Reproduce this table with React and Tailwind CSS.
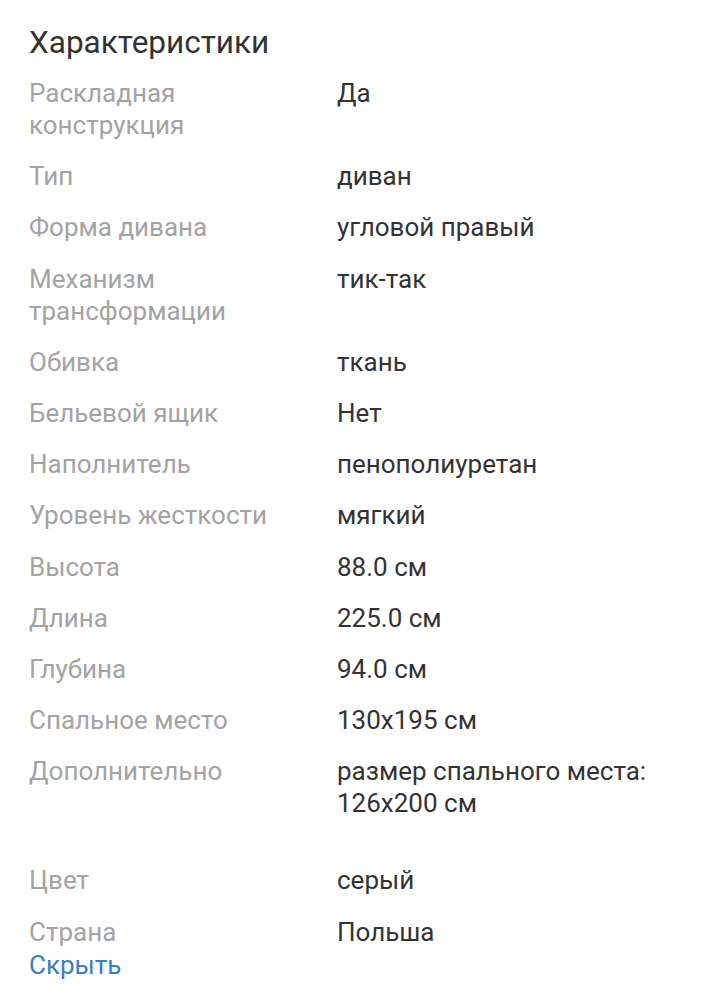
import React from "react";

const specs = [
  ["Раскладная конструкция", "Да"],
  ["Тип", "диван"],
  ["Форма дивана", "угловой правый"],
  ["Механизм трансформации", "тик-так"],
  ["Обивка", "ткань"],
  ["Бельевой ящик", "Нет"],
  ["Наполнитель", "пенополиуретан"],
  ["Уровень жесткости", "мягкий"],
  ["Высота", "88.0 см"],
  ["Длина", "225.0 см"],
  ["Глубина", "94.0 см"],
  ["Спальное место", "130x195 см"],
  ["Дополнительно", "размер спального места: 126x200 см", true],
  ["Цвет", "серый"],
  ["Страна", "Польша"],
];

export default function App() {
  return (
    <div className="min-h-[1000px] bg-white pl-[29px] pr-[29px] pt-[25px] font-['Roboto',sans-serif]">
      <h2 className="text-[31.5px] leading-[36px] text-[#333333] mb-[16px]">Характеристики</h2>
      <div className="flex flex-col gap-[19.2px]">
        {specs.map(([label, value, extra]) => (
          <div key={label} className={"flex text-[26px] leading-[32px] " + (extra ? "pb-[26px]" : "")}>
            <div className="w-[308px] shrink-0 pr-4 text-[#a3a3a3]">{label}</div>
            <div className="flex-1 text-[#333333]">{value}</div>
          </div>
        ))}
      </div>
      <button className="block mt-[1px] text-[26px] leading-[32px] text-[#3a7dc1]">Скрыть</button>
    </div>
  );
}
